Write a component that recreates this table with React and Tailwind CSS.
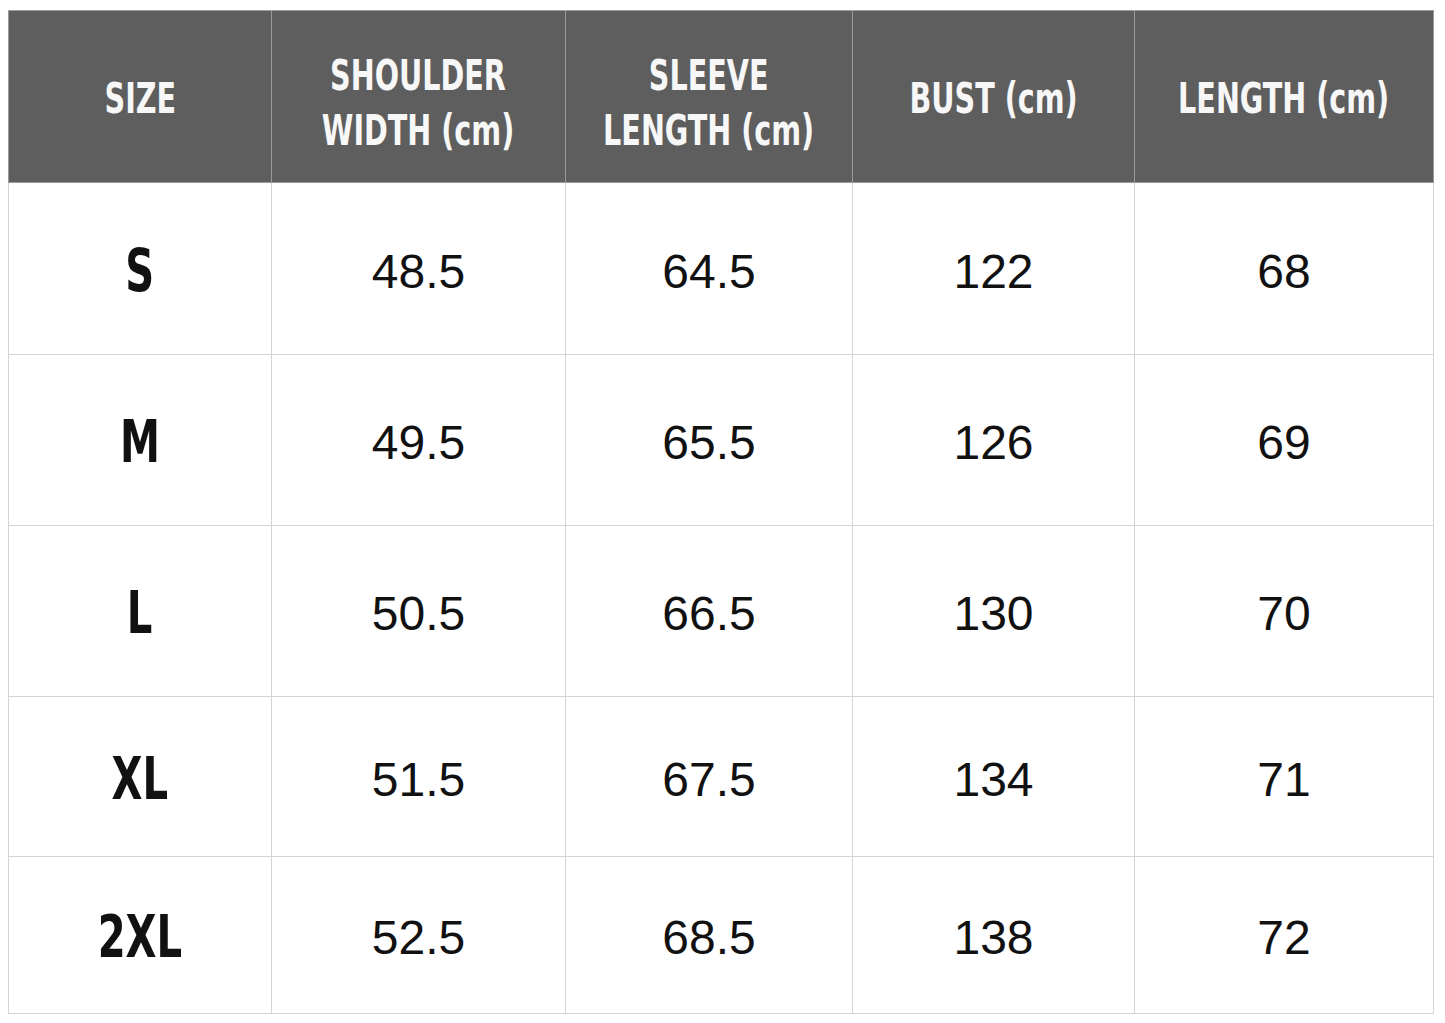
import React from 'react';

const headers = [
  ['SIZE'],
  ['SHOULDER', 'WIDTH (cm)'],
  ['SLEEVE', 'LENGTH (cm)'],
  ['BUST (cm)'],
  ['LENGTH (cm)'],
];

const rows = [
  { size: 'S', vals: ['48.5', '64.5', '122', '68'], h: 'h-[172px]' },
  { size: 'M', vals: ['49.5', '65.5', '126', '69'], h: 'h-[171px]' },
  { size: 'L', vals: ['50.5', '66.5', '130', '70'], h: 'h-[171px]' },
  { size: 'XL', vals: ['51.5', '67.5', '134', '71'], h: 'h-[160px]' },
  { size: '2XL', vals: ['52.5', '68.5', '138', '72'], h: 'h-[157px]' },
];

const widths = ['w-[263px]', 'w-[294px]', 'w-[287px]', 'w-[282px]', 'w-[299px]'];

const condensed = { fontFamily: '"Liberation Sans Narrow", "DejaVu Sans Condensed", "Liberation Sans", sans-serif' };

export default function App() {
  return (
    <div className="w-[1445px] h-[1023px] bg-white pt-[10px] pl-[8px]">
      <table className="border-collapse table-fixed w-[1425px]">
        <thead>
          <tr className="h-[172px] bg-[#5e5e5e]">
            {headers.map((lines, i) => (
              <th
                key={i}
                className={`${widths[i]} border border-[#9a9a9a] text-[#f7f7f7] font-bold text-center align-middle p-0`}
                style={condensed}
              >
                <span className={`inline-block scale-x-[0.74] text-[43px] leading-[55px] ${lines.length > 1 ? 'pt-[12px]' : 'pt-[4px]'}`}>
                  {lines.map((l, j) => (
                    <span key={j} className="block whitespace-nowrap">{l}</span>
                  ))}
                </span>
              </th>
            ))}
          </tr>
        </thead>
        <tbody>
          {rows.map((r) => (
            <tr key={r.size} className={r.h}>
              <td className="border border-[#d4d4d4] text-center align-middle p-0 text-[#111]" style={condensed}>
                <span className="inline-block scale-x-[0.77] text-[58px] font-bold leading-none pt-[4px]">{r.size}</span>
              </td>
              {r.vals.map((v, k) => (
                <td
                  key={k}
                  className="border border-[#d4d4d4] text-center align-middle p-0 text-[48px] text-[#111] leading-none pt-[6px]"
                  style={{ fontFamily: '"Liberation Sans", Arial, sans-serif' }}
                >
                  {v}
                </td>
              ))}
            </tr>
          ))}
        </tbody>
      </table>
    </div>
  );
}
